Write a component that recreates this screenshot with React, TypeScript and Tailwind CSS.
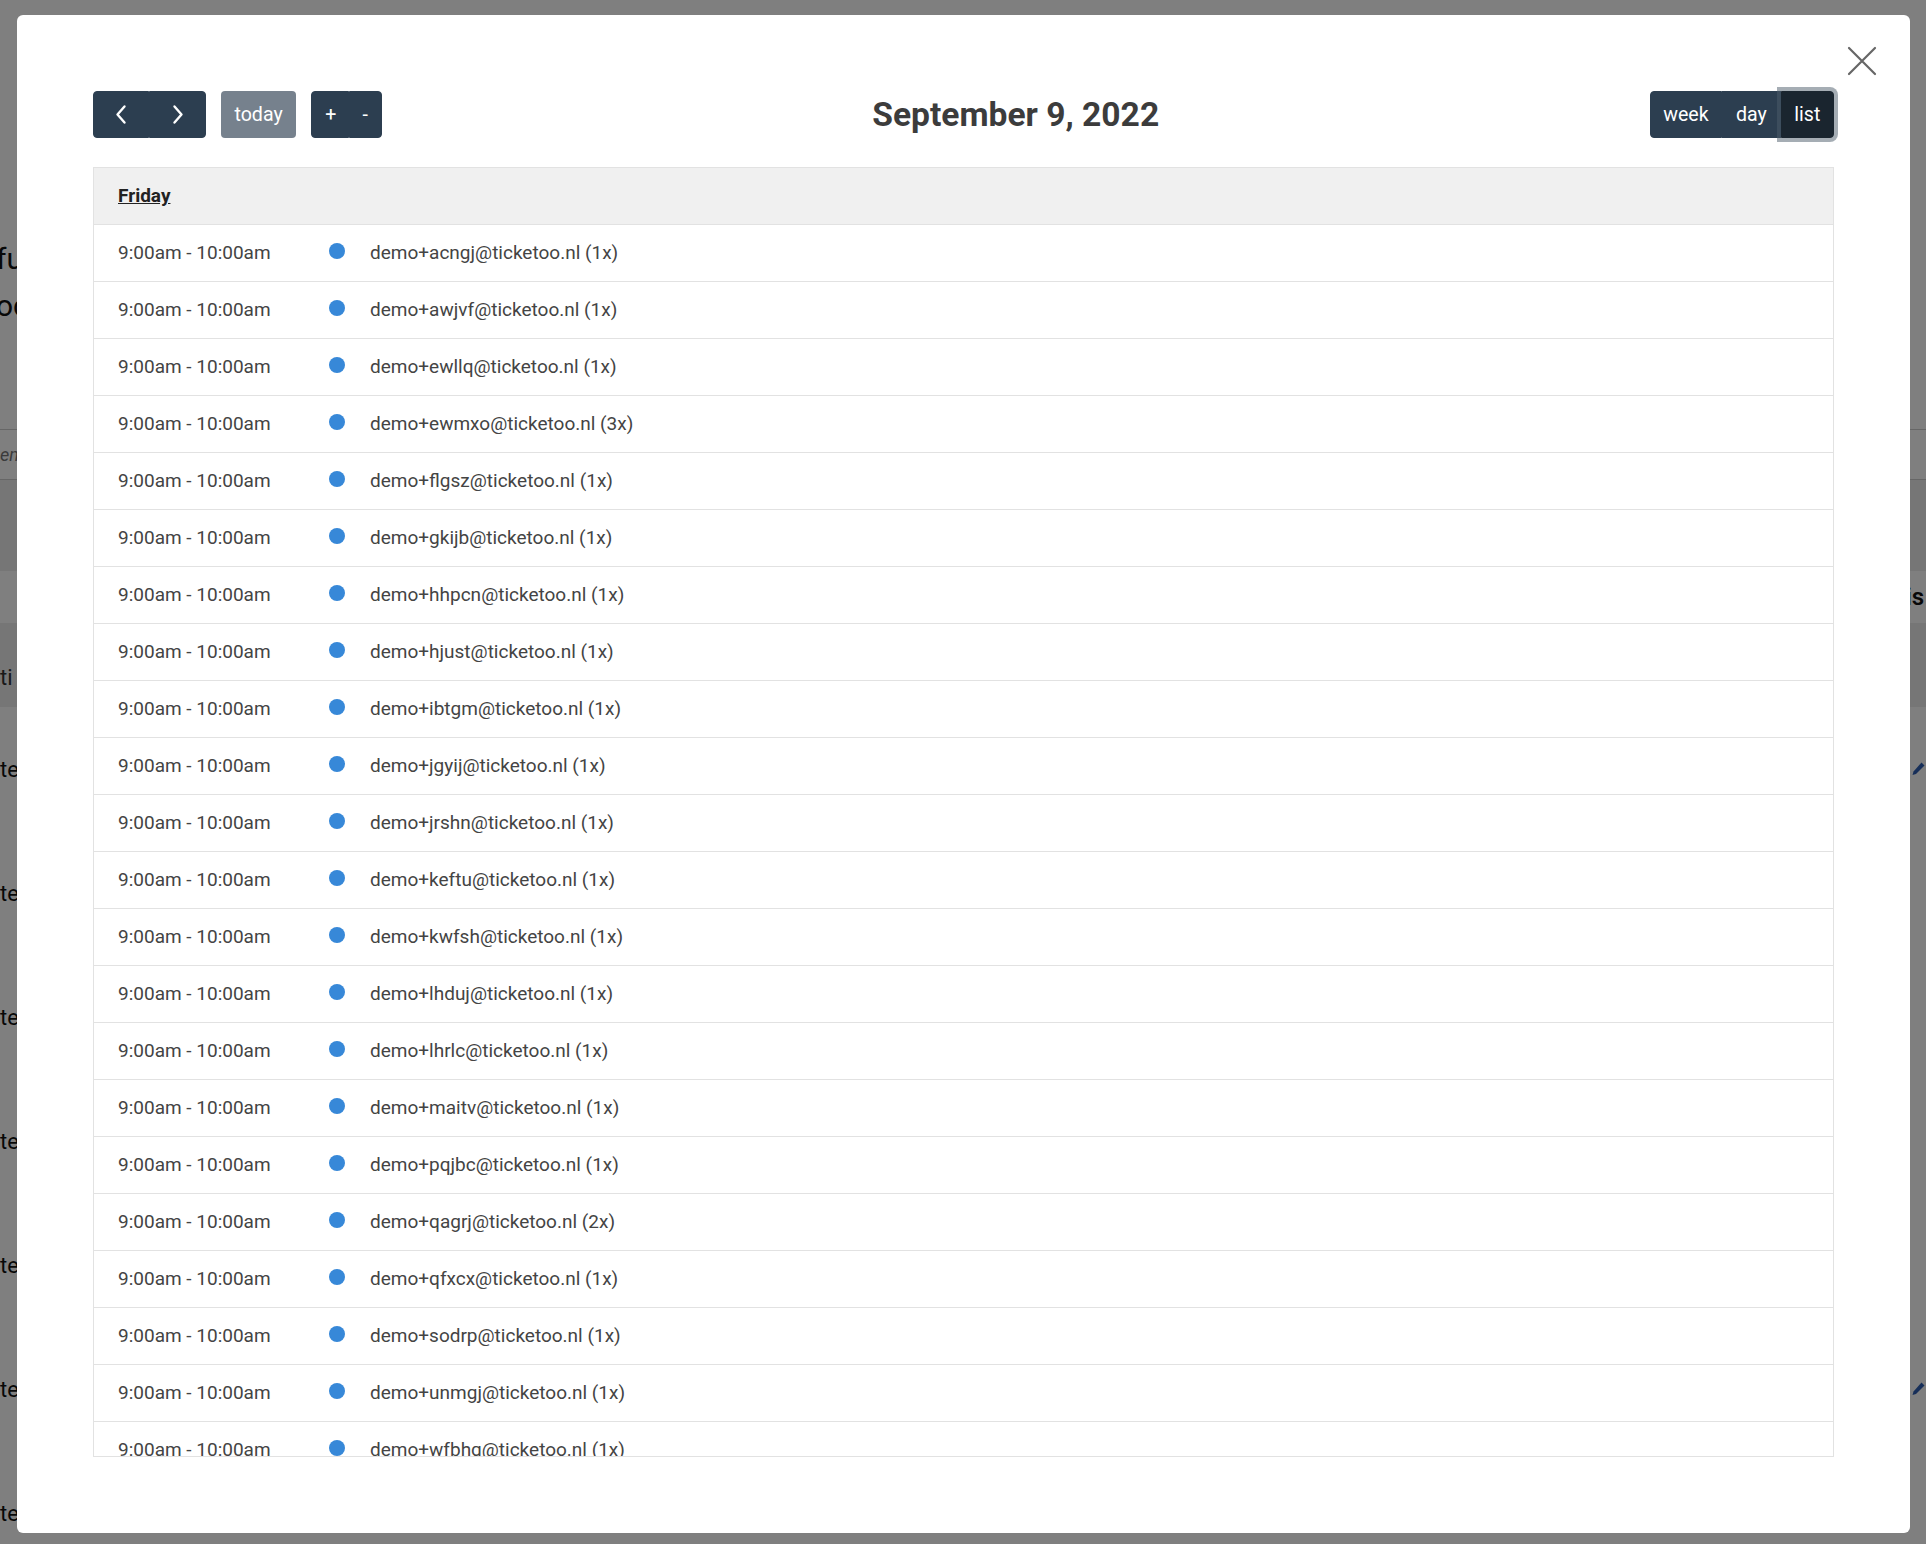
import React from 'react'

const bookings: [string, number][] = [
  ['acngj', 1],
  ['awjvf', 1],
  ['ewllq', 1],
  ['ewmxo', 3],
  ['flgsz', 1],
  ['gkijb', 1],
  ['hhpcn', 1],
  ['hjust', 1],
  ['ibtgm', 1],
  ['jgyij', 1],
  ['jrshn', 1],
  ['keftu', 1],
  ['kwfsh', 1],
  ['lhduj', 1],
  ['lhrlc', 1],
  ['maitv', 1],
  ['pqjbc', 1],
  ['qagrj', 2],
  ['qfxcx', 1],
  ['sodrp', 1],
  ['unmgj', 1],
  ['wfbhg', 1],
]

function Pencil() {
  return (
    <svg width="16" height="16" viewBox="0 0 16 16" fill="#2f5fb3">
      <path d="M11.5 1.5l3 3-8.5 8.5-3.5 1 1-3.5z" />
    </svg>
  )
}

function Chevron({ dir }: { dir: 'left' | 'right' }) {
  return (
    <svg width="29" height="29" viewBox="0 0 29 29" fill="none" stroke="#fff" strokeWidth="2.4" strokeLinecap="round" strokeLinejoin="round">
      {dir === 'left' ? <path d="M17.5 6.5 L10.5 14.5 L17.5 22.5" /> : <path d="M11.5 6.5 L18.5 14.5 L11.5 22.5" />}
    </svg>
  )
}

// page that sits behind the modal backdrop
function BackgroundPage() {
  const rows = [0, 1, 2, 3, 4, 5, 6]
  return (
    <div className="w-full text-[#111]">
      <div className="h-[235px]" />
      <div className="text-[30px] leading-[47px] -ml-[4px]">
        <div>fu</div>
        <div>oc</div>
      </div>
      <div className="h-[100px]" />
      <div className="h-[51px] border-y border-[#ccc] flex items-center text-[18px] italic text-[#777]">em</div>
      <div className="h-[91px] bg-[#ececec]" />
      <div className="h-[52px] flex items-center justify-end pr-[2px] text-[24px] font-semibold">is</div>
      <div className="h-[84px] bg-[#ececec] flex items-center pt-[24px] text-[22px] text-[#333]">ti</div>
      {rows.map((r) => (
        <div key={r} className="h-[124px] flex items-center justify-between text-[22px]">
          <span>te</span>
          {(r === 0 || r === 5) && <Pencil />}
        </div>
      ))}
    </div>
  )
}

export default function App() {
  return (
    <div className="relative w-full h-[1544px] overflow-hidden bg-white font-[Roboto,sans-serif]">
      <BackgroundPage />

      {/* backdrop */}
      <div className="absolute inset-0 bg-black/50" />

      {/* modal */}
      <div className="absolute left-[17px] top-[15px] w-[1893px] h-[1518px] rounded-[6px] bg-white px-[76px] pt-[76px] text-[19px] text-[#444]">
        <button className="absolute right-[33px] top-[31px] w-[30px] h-[30px]">
          <svg width="30" height="30" viewBox="0 0 30 30" stroke="#666" strokeWidth="2.2" strokeLinecap="round">
            <path d="M2 2 L28 28 M28 2 L2 28" />
          </svg>
        </button>

        {/* toolbar */}
        <div className="flex items-center justify-between h-[47px] text-[19.6px]">
          <div className="flex items-center gap-[15px]">
            <div className="flex">
              <button className="h-[47px] px-[12.7px] bg-[#2c3e50] border border-[#2c3e50] rounded-l-[4px] flex items-center">
                <Chevron dir="left" />
              </button>
              <button className="h-[47px] px-[12.7px] bg-[#2c3e50] border border-[#2c3e50] rounded-r-[4px] flex items-center">
                <Chevron dir="right" />
              </button>
            </div>
            <button className="h-[47px] px-[12.7px] bg-[#2c3e50]/65 border border-transparent rounded-[4px] text-white leading-[1.5]">
              today
            </button>
            <div className="flex">
              <button className="h-[47px] pl-[13px] pr-[12px] bg-[#2c3e50] border border-[#2c3e50] rounded-l-[4px] text-white leading-[1.5]">
                +
              </button>
              <button className="h-[47px] pl-[12px] pr-[13px] bg-[#2c3e50] border border-[#2c3e50] rounded-r-[4px] text-white leading-[1.5]">
                -
              </button>
            </div>
          </div>

          <h2 className="text-[33.6px] font-bold text-[#3c3c3c] leading-none">September 9, 2022</h2>

          <div className="flex">
            <button className="h-[47px] px-[12.7px] bg-[#2c3e50] border border-[#2c3e50] rounded-l-[4px] text-white leading-[1.5]">
              week
            </button>
            <button className="h-[47px] px-[12.7px] bg-[#2c3e50] border border-[#2c3e50] text-white leading-[1.5]">
              day
            </button>
            <button className="relative h-[47px] px-[12.7px] bg-[#1a252f] border border-[#1a252f] rounded-r-[4px] text-white leading-[1.5] shadow-[0_0_0_4px_rgba(76,91,106,0.5)]">
              list
            </button>
          </div>
        </div>

        {/* list view */}
        <div className="mt-[29px] h-[1290px] border border-[#e2e2e2] overflow-hidden">
          <div className="h-[57px] bg-[#f0f0f0] border-b border-[#e2e2e2] flex items-center pl-[24px]">
            <span className="font-bold underline text-[#222]">Friday</span>
          </div>
          {bookings.map(([name, n]) => (
            <div key={name} className="h-[57px] border-b border-[#e2e2e2] flex items-center">
              <div className="w-[212px] pl-[24px] whitespace-nowrap">9:00am - 10:00am</div>
              <div className="pl-[23px] pr-[25px] -translate-y-[2px]">
                <div className="w-[16px] h-[16px] rounded-full bg-[#3788d8]" />
              </div>
              <div className="whitespace-nowrap">
                demo+{name}@ticketoo.nl ({n}x)
              </div>
            </div>
          ))}
        </div>
      </div>
    </div>
  )
}
